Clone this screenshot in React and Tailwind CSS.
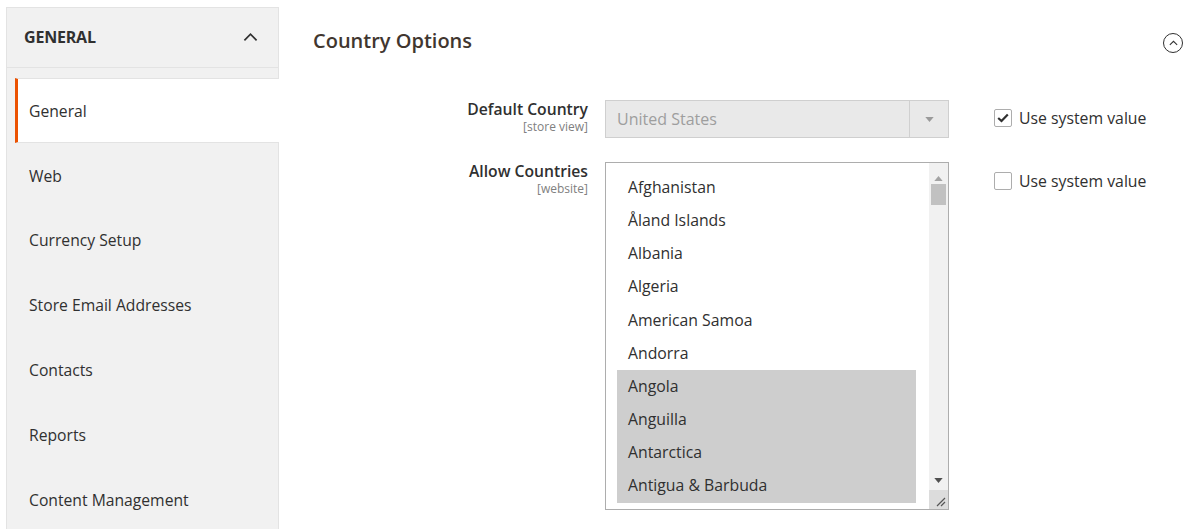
import React from 'react';

const navItems = ['Web', 'Currency Setup', 'Store Email Addresses', 'Contacts', 'Reports', 'Content Management'];

const countries = [
  { name: 'Afghanistan' },
  { name: 'Åland Islands' },
  { name: 'Albania' },
  { name: 'Algeria' },
  { name: 'American Samoa' },
  { name: 'Andorra' },
  { name: 'Angola', selected: true },
  { name: 'Anguilla', selected: true },
  { name: 'Antarctica', selected: true },
  { name: 'Antigua & Barbuda', selected: true },
];

const ChevronUp = ({ className }) => (
  <svg viewBox="0 0 16 10" className={className} fill="none" stroke="currentColor" strokeWidth="1.8">
    <path d="M1.5 8.5 L8 2 L14.5 8.5" />
  </svg>
);

const Checkbox = ({ checked }) => (
  <span className="w-[18px] h-[18px] border border-[#adadad] rounded-[2px] bg-white flex items-center justify-center">
    {checked && (
      <svg viewBox="0 0 12 10" className="w-[12px] h-[10px]" fill="none" stroke="#303030" strokeWidth="2.2">
        <path d="M1.2 5 L4.5 8 L10.8 1.5" />
      </svg>
    )}
  </span>
);

const FieldLabel = ({ title, scope }) => (
  <div className="w-[326px] text-right pr-[17px]">
    <div className="text-[15.7px] font-semibold leading-[20px] text-[#303030]">{title}</div>
    <div className="text-[12px] leading-[15px] text-[#808080]">{scope}</div>
  </div>
);

export default function App() {
  return (
    <div className="w-[1192px] h-[529px] overflow-hidden bg-white flex text-[#303030]" style={{ fontFamily: '"Open Sans", "Liberation Sans", sans-serif' }}>
      {/* Sidebar */}
      <aside className="ml-[6px] mt-[7px] w-[273px] shrink-0 bg-[#f1f1f1] border-x border-t border-[#e3e3e3] flex flex-col">
        <div className="h-[60px] shrink-0 border-b border-[#e3e3e3] flex items-center justify-between pl-[17px] pr-[20px] pb-[1px]">
          <span className="text-[16px] font-bold tracking-[-0.2px] text-[#303030]">GENERAL</span>
          <ChevronUp className="w-[15px] h-[10px] text-[#303030]" />
        </div>
        <div className="h-[10px] shrink-0" />
        <div className="ml-[8px] -mr-px h-[65px] shrink-0 bg-white border-l-[3px] border-l-[#eb5202] border-y border-y-[#e3e3e3] flex items-center pl-[11px] pt-[2px]">
          <span className="text-[15.7px]">General</span>
        </div>
        {navItems.map((item) => (
          <div key={item} className="h-[64.8px] shrink-0 flex items-center pl-[22px] pt-[2px]">
            <span className="text-[15.7px]">{item}</span>
          </div>
        ))}
      </aside>

      {/* Main */}
      <main className="flex-1 flex flex-col">
        <div className="flex items-center justify-between pl-[34px] pr-[9px] pt-[26px]">
          <h2 className="text-[20px] font-semibold text-[#41362f] leading-[30px]">Country Options</h2>
          <span className="w-[20px] h-[20px] rounded-full border-[1.5px] border-[#303030] flex items-center justify-center mt-[4px]">
            <ChevronUp className="w-[9px] h-[6px] text-[#303030]" />
          </span>
        </div>

        <div className="mt-[44px] flex items-start">
          <div className="-mt-[1px]">
            <FieldLabel title="Default Country" scope="[store view]" />
          </div>
          <div className="w-[344px] h-[38px] border border-[#cfcfcf] bg-[#e9e9e9] flex">
            <div className="flex-1 flex items-center pl-[11px] text-[16px] text-[#9e9e9e]">United States</div>
            <div className="w-[39px] border-l border-[#d0d0d0] flex items-center justify-center">
              <svg viewBox="0 0 10 6" className="w-[9px] h-[5px]"><path d="M0 0 L10 0 L5 6 Z" fill="#9a9a9a" /></svg>
            </div>
          </div>
          <label className="ml-[45px] mt-[8px] flex items-center gap-[7px]">
            <Checkbox checked />
            <span className="text-[15.8px] leading-[20px]">Use system value</span>
          </label>
        </div>

        <div className="mt-[24px] flex items-start">
          <div className="-mt-[1px]">
            <FieldLabel title="Allow Countries" scope="[website]" />
          </div>
          <div className="w-[344px] h-[348px] border border-[#adadad] bg-white flex">
            <div className="flex-1 pl-[11px] pr-[13px] pt-[8px] flex flex-col">
              {countries.map((c) => (
                <div
                  key={c.name}
                  className={`h-[33.2px] shrink-0 flex items-center pl-[11px] text-[15.8px] ${c.selected ? 'bg-[#cecece]' : ''}`}
                >
                  {c.name}
                </div>
              ))}
            </div>
            <div className="w-[19px] bg-[#f1f1f1] flex flex-col">
              <div className="h-[21px] flex items-end justify-center pb-[3px]">
                <svg viewBox="0 0 10 6" className="w-[9px] h-[5px]"><path d="M0 6 L10 6 L5 0 Z" fill="#a3a3a3" /></svg>
              </div>
              <div className="mx-[2px] h-[21px] bg-[#c1c1c1]" />
              <div className="flex-1" />
              <div className="h-[20px] flex items-center justify-center">
                <svg viewBox="0 0 10 6" className="w-[9px] h-[5px]"><path d="M0 0 L10 0 L5 6 Z" fill="#505050" /></svg>
              </div>
              <div className="h-[19px] bg-[#dcdcdc] flex items-end justify-end pr-[2px] pb-[2px]">
                <svg viewBox="0 0 10 10" className="w-[10px] h-[10px]" stroke="#555" strokeWidth="1.2">
                  <path d="M9 1 L1 9 M9 5 L5 9" />
                </svg>
              </div>
            </div>
          </div>
          <label className="ml-[45px] mt-[9px] flex items-center gap-[7px]">
            <Checkbox />
            <span className="text-[15.8px] leading-[20px]">Use system value</span>
          </label>
        </div>
      </main>
    </div>
  );
}
